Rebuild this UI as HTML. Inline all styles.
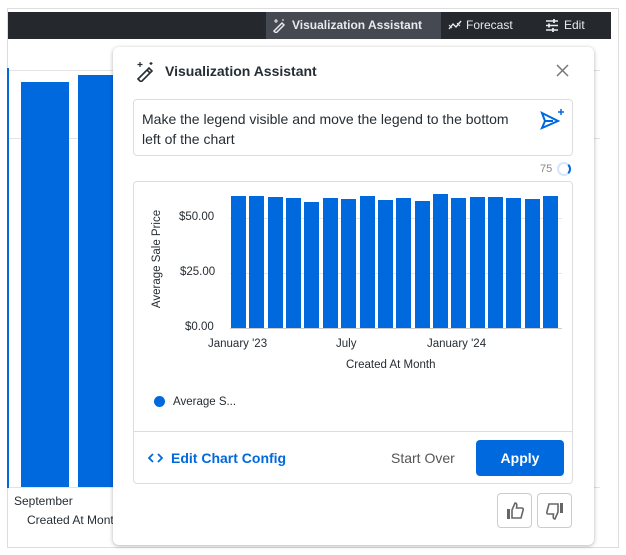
<!DOCTYPE html><html><head><style>
*{box-sizing:border-box;margin:0;padding:0}
body{width:626px;height:555px;background:#fff;font-family:"Liberation Sans",sans-serif;position:relative;overflow:hidden;color:#262d33}
.a{position:absolute}
</style></head><body>
<div class="a" style="left:7px;top:8px;width:612px;height:540px;border:1px solid #ddd"></div>
<div class="a" style="left:8px;top:12px;width:603px;height:27px;background:#25282d"></div>
<div class="a" style="left:266px;top:12px;width:175px;height:27px;background:#454a52"></div>
<svg class="a" style="left:272px;top:18px" width="15" height="15" viewBox="0 0 15 15" fill="none" stroke="#e8eaed" stroke-width="1.5"><path d="M2 13 L10 5 L12 7 L4 15 Z"/><path d="M4 1v4M2 3h4M11 1v2" stroke-width="1.1"/></svg>
<div class="a" style="left:292px;top:18px;color:#e8eaed;font-size:12px;font-weight:bold">Visualization Assistant</div>
<svg class="a" style="left:448px;top:19px" width="14" height="12" viewBox="0 0 14 12" fill="none" stroke="#e8eaed" stroke-width="1.4"><path d="M1 10 L5 5 L8 8 L13 2"/><path d="M1 6l3 3M9 4l3 3" stroke-width="1"/></svg>
<div class="a" style="left:466px;top:18px;color:#e8eaed;font-size:12px">Forecast</div>
<svg class="a" style="left:545px;top:19px" width="14" height="13" viewBox="0 0 14 13" stroke="#e8eaed" stroke-width="1.6"><path d="M1 2h12M1 6.5h12M1 11h12"/><path d="M9 0v4M4 4.5v4M8 9v4" stroke-width="1.8"/></svg>
<div class="a" style="left:564px;top:18px;color:#e8eaed;font-size:12px">Edit</div>
<div class="a" style="left:8px;top:70px;width:592px;height:1px;background:#e3e3e3"></div>
<div class="a" style="left:8px;top:138px;width:592px;height:1px;background:#e3e3e3"></div>
<div class="a" style="left:8px;top:487px;width:592px;height:1px;background:#e3e3e3"></div>
<div class="a" style="left:7px;top:68px;width:2px;height:420px;background:#0069de"></div>
<div class="a" style="left:21px;top:82px;width:48px;height:405px;background:#0069de"></div>
<div class="a" style="left:78px;top:75px;width:40px;height:412px;background:#0069de"></div>
<div class="a" style="left:14px;top:494px;font-size:12px">September</div>
<div class="a" style="left:27px;top:513px;font-size:12px">Created At Month</div>
<div class="a" style="left:113px;top:47px;width:481px;height:498px;background:#fff;border-radius:6px;box-shadow:0 1px 4px rgba(0,0,0,.3)"></div>
<svg class="a" style="left:134px;top:60px" width="22" height="22" viewBox="0 0 22 22" fill="none" stroke="#262d33" stroke-width="1.6"><path d="M4 19 L15 8 L18 11 L7 22 Z M13 10 l3 3"/><path d="M6 2v5M3.5 4.5h5M17 2v3M15.5 3.5h3" stroke-width="1.2"/></svg>
<div class="a" style="left:165px;top:63px;font-size:14px;font-weight:bold;color:#262d33">Visualization Assistant</div>
<svg class="a" style="left:556px;top:64px" width="13" height="13" viewBox="0 0 13 13" stroke="#777" stroke-width="1.5"><path d="M1 1L12 12M12 1L1 12"/></svg>
<div class="a" style="left:133px;top:99px;width:440px;height:57px;border:1px solid #ddd;border-radius:4px"></div>
<div class="a" style="left:142px;top:109px;font-size:14px;line-height:20px;width:385px">Make the legend visible and move the legend to the bottom left of the chart</div>
<svg class="a" style="left:539px;top:108px" width="26" height="24" viewBox="0 0 26 24" fill="none" stroke="#0069de" stroke-width="2"><path d="M3 5 L19 13 L3 20 L6 13 Z M6 13h8"/><path d="M22 1v6M19 4h6" stroke-width="1.5"/></svg>
<div class="a" style="left:540px;top:163px;font-size:11px;color:#888">75</div>
<div class="a" style="left:557px;top:162px;width:14px;height:14px;border-radius:50%;border:2px solid #d6e6fa;border-right-color:#0069de"></div>
<div class="a" style="left:133px;top:181px;width:440px;height:303px;border:1px solid #ddd;border-radius:4px"></div>
<div class="a" style="left:134px;top:431px;width:438px;height:1px;background:#ddd"></div>
<div class="a" style="left:230px;top:218px;width:332px;height:1px;background:#e6e6e6"></div>
<div class="a" style="left:230px;top:273px;width:332px;height:1px;background:#e6e6e6"></div>
<div class="a" style="left:230px;top:328px;width:332px;height:1px;background:#ccc"></div>
<div class="a" style="left:179px;top:211px;font-size:11.5px">$50.00</div>
<div class="a" style="left:180px;top:266px;font-size:11.5px">$25.00</div>
<div class="a" style="left:185px;top:321px;font-size:11.5px">$0.00</div>
<div class="a" style="left:100px;top:253px;font-size:11.5px;transform:rotate(-90deg);width:114px;text-align:center">Average Sale Price</div>
<div class="a" style="left:208px;top:338px;font-size:11.5px">January '23</div>
<div class="a" style="left:336px;top:338px;font-size:11.5px">July</div>
<div class="a" style="left:427px;top:338px;font-size:11.5px">January '24</div>
<div class="a" style="left:346px;top:359px;font-size:11.5px">Created At Month</div>
<div id="bars"></div>
<div class="a" style="left:154px;top:396px;width:11px;height:11px;border-radius:50%;background:#0069de"></div>
<div class="a" style="left:173px;top:396px;font-size:11.5px">Average S...</div>
<svg class="a" style="left:148px;top:452px" width="15" height="12" viewBox="0 0 15 12" fill="none" stroke="#0069de" stroke-width="1.8"><path d="M5 2L1 6L5 10M10 2L14 6L10 10"/></svg>
<div class="a" style="left:171px;top:450px;font-size:14px;font-weight:bold;color:#0069de">Edit Chart Config</div>
<div class="a" style="left:391px;top:450px;font-size:14px;color:#555">Start Over</div>
<div class="a" style="left:476px;top:440px;width:88px;height:36px;background:#0069de;border-radius:4px;color:#fff;font-size:14px;font-weight:bold;text-align:center;line-height:36px">Apply</div>
<div class="a" style="left:497px;top:493px;width:35px;height:35px;border:1px solid #ccc;border-radius:4px"></div>
<div class="a" style="left:537px;top:493px;width:35px;height:35px;border:1px solid #ccc;border-radius:4px"></div>
<svg class="a" style="left:505px;top:501px" width="20" height="20" viewBox="0 0 20 20" fill="none" stroke="#666" stroke-width="1.6"><rect x="2" y="8" width="3" height="10" fill="#666" stroke="none"/><path d="M7 9 L10 2 C12 2 12 4 11.5 7 H17 C18 7 18.5 8 18 9.5 L16 17 H7 Z"/></svg>
<svg class="a" style="left:545px;top:501px;transform:rotate(180deg)" width="20" height="20" viewBox="0 0 20 20" fill="none" stroke="#666" stroke-width="1.6"><rect x="2" y="8" width="3" height="10" fill="#666" stroke="none"/><path d="M7 9 L10 2 C12 2 12 4 11.5 7 H17 C18 7 18.5 8 18 9.5 L16 17 H7 Z"/></svg>
<script>
var t=[196,196,197,198,202,198,199,196,200,198,201,194,198,197,197,198,199,196],h='';
for(var i=0;i<18;i++){var x=231+i*18.35;h+='<div class="a" style="left:'+x.toFixed(1)+'px;top:'+t[i]+'px;width:15px;height:'+(328-t[i])+'px;background:#0069de"></div>';}
document.getElementById('bars').outerHTML=h;
</script>
</body></html>
